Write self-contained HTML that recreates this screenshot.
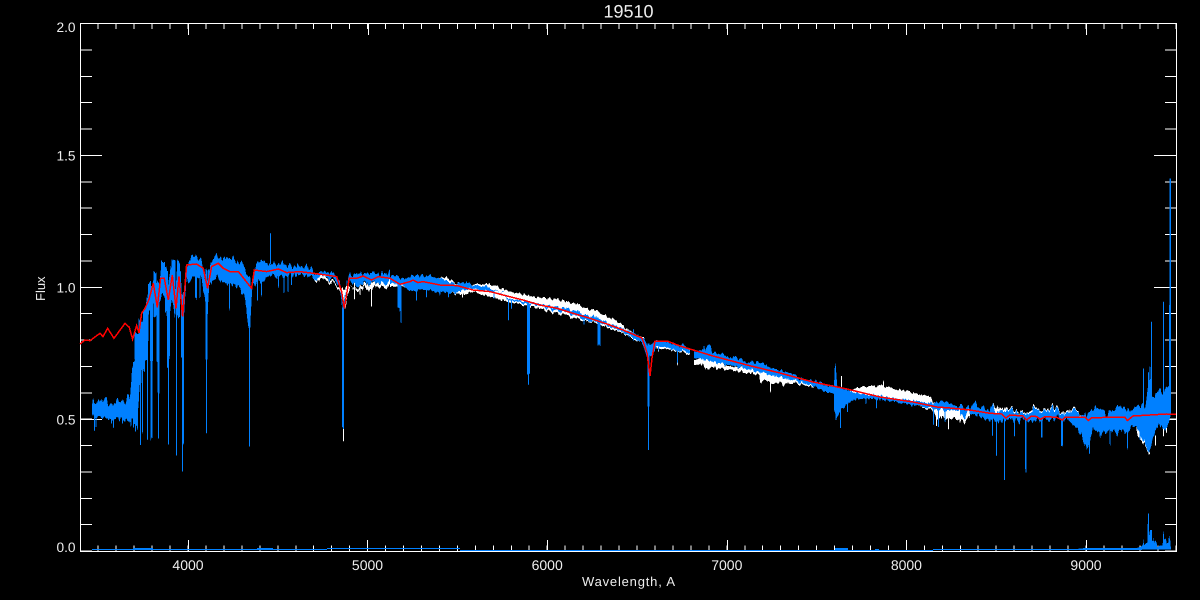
<!DOCTYPE html>
<html><head><meta charset="utf-8"><title>19510</title>
<style>
html,body{margin:0;padding:0;background:#000;width:1200px;height:600px;overflow:hidden}
svg{display:block}
text{font-family:"Liberation Sans",sans-serif;fill:#eee}
.b{fill:#0080ff}.w{fill:#fff}
.sb{stroke:#0080ff;stroke-width:3;fill:none}
.sw{stroke:#fff;stroke-width:3;fill:none}
</style></head><body>
<svg width="1200" height="600" viewBox="0 0 1200 600" xmlns="http://www.w3.org/2000/svg" shape-rendering="crispEdges">
<defs>
<filter id="nS" filterUnits="userSpaceOnUse" x="0" y="0" width="1200" height="600" color-interpolation-filters="sRGB">
<feTurbulence type="fractalNoise" baseFrequency="0.37 0.03" numOctaves="2" seed="4" result="t"/>
<feColorMatrix in="t" type="matrix" values="0 0 0 0 .5  0 1 0 0 0  0 0 0 0 .5  0 0 0 0 1" result="m"/>
<feDisplacementMap in="SourceGraphic" in2="m" scale="14" xChannelSelector="R" yChannelSelector="G"/>
</filter>
<filter id="nW" filterUnits="userSpaceOnUse" x="0" y="0" width="1200" height="600" color-interpolation-filters="sRGB">
<feTurbulence type="fractalNoise" baseFrequency="0.37 0.03" numOctaves="2" seed="9" result="t"/>
<feColorMatrix in="t" type="matrix" values="0 0 0 0 .5  0 1 0 0 0  0 0 0 0 .5  0 0 0 0 1" result="m"/>
<feDisplacementMap in="SourceGraphic" in2="m" scale="7" xChannelSelector="R" yChannelSelector="G"/>
</filter>
</defs>
<rect width="1200" height="600" fill="#000"/>

<!-- frame and ticks -->
<g fill="none" stroke="#fff" stroke-width="1">
<rect x="80.5" y="23.5" width="1096" height="528"/>
<line x1="97.7" y1="26" x2="1176" y2="26" stroke-width="6" stroke-dasharray="1 16.96"/>
<line x1="97.7" y1="548.5" x2="1176" y2="548.5" stroke-width="6" stroke-dasharray="1 16.96"/>
<line x1="86" y1="23" x2="86" y2="551" stroke-width="12" stroke-dasharray="1 25.38"/>
<line x1="1170.5" y1="23" x2="1170.5" y2="551" stroke-width="11" stroke-dasharray="1 25.38"/>
<path d="M188.5 23V35M368.5 23V35M547.5 23V35M727.5 23V35M906.5 23V35M1086.5 23V35M188.5 551V540M367.5 551V540M547.5 551V540M727.5 551V540M906.5 551V540M1086.5 551V540"/>
<path d="M80 155.5H102M80 287.5H102M80 419.5H102M1154 155.5H1176M1154 287.5H1176M1154 419.5H1176"/>
</g>

<!-- strong-noise part of the spectrum -->
<g filter="url(#nS)">
<g transform="translate(70 220) scale(.33333)">
<polygon class="w" points="720,160 790,183 812,215 835,200 960,185 960,202 920,200 900,208 860,205 840,200 826,265 815,225 790,190 740,180"/>
<path class="sw" d="M853 190V242M870 190V230M905 190V260"/>
</g>
<g transform="translate(950 170) scale(.33333)">
<polygon class="w" points="0,730 60,730 60,745 30,760 20,745 0,745"/>
<polygon class="w" points="130,705 155,712 172,716 200,718 225,732 235,720 250,710 270,722 290,711 315,710 330,726 345,720 380,718 395,732 380,740 130,745"/>
<polygon class="w" points="560,770 600,835 596,842 575,810 560,790"/>
<path class="sw" d="M650 720V790M640 760V800M616 800V832M585 780V810"/>
</g>
<g transform="translate(70 220) scale(.33333)">
<polygon class="b" points="66,555 70,545 85,548 105,532 115,550 130,552 145,542 165,545 180,528 186,450 195,420 205,345 215,325 225,275 237,190 245,205 255,165 262,240 275,130 285,130 290,230 303,135 315,250 322,120 332,155 338,290 345,185 350,145 360,118 378,105 395,125 410,200 422,128 440,112 470,112 495,120 520,135 535,178 545,210 552,140 570,122 590,132 640,132 680,140 712,140 740,157 790,157 810,190 818,260 835,170 860,158 880,160 920,160 960,156 960,186 900,190 860,190 830,186 822,270 818,280 810,205 790,176 740,172 712,168 680,162 640,170 600,166 570,180 548,186 541,320 535,320 525,235 510,208 495,192 470,190 430,172 418,195 412,290 405,235 395,180 378,172 350,182 345,240 341,300 335,250 325,205 315,290 305,230 295,330 285,235 275,225 262,260 255,235 237,280 225,400 212,470 200,610 185,604 160,595 120,598 100,590 66,590"/>
<path class="sb" style="stroke-width:14" d="M196 430V610M208 345V500M218 325V450"/>
<path class="sb" d="M73 590V635M78 590V620M125 590V610M130 590V625M157 590V612M183 590V615M190 590V625M197 590V630M203 450V628M211 400V677M218 430V640M232 240V650M265 250V656M295 320V668M320 250V705M338 290V750M380 170V240M390 170V235M409 280V645M478 190V262M528 210V260M538 300V673M562 180V248M574 170V220M626 165V205M642 165V210M654 165V225M665 165V200M601 35V130M820 270V620"/>
<path class="sb" style="stroke-width:6" d="M245 200V655M265 240V520M294 230V440M339 290V680M409 290V390M538 175V325M819 265V620M232 230V360"/>
<path class="sw" d="M820 620V667"/>
</g>
<!-- wide absorption columns between 3700 and 4100 A -->
<g transform="translate(125 250) scale(.33333)">
<path class="sb" style="stroke-width:12" d="M34 250V330M46 210V330M60 185V330M114 35V130M146 30V140"/>
<path class="sb" style="stroke-width:9" d="M73 95V160M79 160V330M90 68V200M99 100V330M124 60V180M131 125V330M160 30V190M173 130V330"/>
<path class="sb" style="stroke-width:6" d="M213 30V150M245 60V330M252 60V110"/>
</g>
<g transform="translate(950 170) scale(.33333)">
<polygon class="b" points="30,705 40,708 58,720 72,695 78,692 82,718 100,710 120,722 128,708 138,728 155,715 165,725 172,720 185,720 200,722 225,735 235,725 250,715 270,725 290,715 315,715 330,730 345,725 380,722 395,735 412,735 430,720 460,718 470,735 490,720 510,710 525,725 545,715 560,712 570,706 580,706 585,720 595,640 600,620 605,620 607,705 620,690 632,668 645,660 650,650 657,665 662,665 662,725 650,735 640,762 625,735 615,772 600,822 590,830 575,792 560,762 550,745 535,790 520,780 500,790 480,780 460,790 430,780 420,810 410,830 395,800 380,770 350,745 330,745 290,745 270,750 240,750 200,750 170,745 130,760 100,745 80,740 60,728 30,745"/>
<path class="sb" d="M640 402V700M604 456V700M580 588V720M596 612V720M600 595V720M139 740V864M163 740V930M127 740V805M193 740V795M405 790V828M532 770V838M480 770V822M450 770V802M418 780V848"/>
<path class="sb" style="stroke-width:5" d="M227 745V893M275 745V800M336 745V828"/>
</g>
<!-- noisy red end of the spectrum -->
<g transform="translate(1120 360) scale(.33333)">
<polygon class="b" points="0,140 30,150 55,140 70,130 75,165 90,160 95,120 105,105 120,90 135,100 152,60 152,175 145,190 135,215 125,195 110,200 100,235 85,268 70,240 55,210 35,195 20,205 0,180"/>
<path class="sb" d="M22 180V270M60 200V240"/>
</g>
</g>
<!-- undisturbed tall spikes -->
<g transform="translate(950 170) scale(.33333)">
<path class="sb" style="stroke-width:5" d="M661 25V730"/>
<path class="sb" style="stroke-width:5" d="M659 405V700"/>
<path class="sb" d="M228 893V908M163 900V930M640 402V660M604 456V660"/>
</g>

<!-- weak-noise part of the spectrum -->
<g filter="url(#nW)">
<g transform="translate(390 250) scale(.33333)">
<polygon class="w" points="0,95 140,85 170,78 200,100 240,105 280,100 350,120 365,125 420,138 500,148 560,162 620,185 680,213 710,235 740,255 760,262 770,280 740,270 700,250 600,215 500,190 400,165 350,155 250,125 220,135 140,120 0,108"/>
<polygon class="w" points="795,280 830,285 895,298 898,315 860,300 800,295"/>
<path class="sw" d="M218 120V146M862 300V346M805 290V305"/>
</g>
<g transform="translate(680 330) scale(.33333)">
<polygon class="w" points="0,50 30,60 30,75 0,65"/>
<polygon class="w" points="42,85 72,85 100,92 150,110 200,115 240,125 300,140 400,160 400,172 370,165 320,160 310,170 300,158 280,160 268,155 240,155 238,135 200,128 100,112 75,118 70,103 42,103"/>
<polygon class="w" points="505,185 530,172 570,165 610,170 680,183 750,200 760,215 840,240 840,272 825,265 805,268 790,262 770,262 760,240 700,225 600,205 520,190"/>
<path class="sw" d="M610 155V185M485 135V180M272 150V185M805 260V300M785 255V270M770 255V285"/>
</g>
<g transform="translate(390 250) scale(.33333)">
<polygon class="b" points="0,78 18,78 30,85 50,85 66,76 85,72 90,80 115,76 125,85 140,82 165,87 200,102 230,98 250,107 285,107 310,122 345,132 350,144 400,154 440,162 500,172 550,180 600,197 650,217 700,237 740,252 765,270 775,290 780,282 800,270 850,280 895,295 895,308 850,296 800,288 785,315 770,320 755,276 720,256 680,238 640,223 600,213 550,193 500,183 450,168 400,160 350,148 340,128 310,126 250,116 225,120 200,128 180,128 150,128 120,123 100,118 60,123 40,108 20,103 0,98"/>
<path class="sb" d="M33 100V220M80 110V150M110 110V143M150 120V135M175 120V140M312 125V145M355 145V210M364 150V175M415 160V407M582 200V222M717 240V262M730 240V268M805 290V302M862 295V340M30 100V185"/>
<path class="sb" style="stroke-width:9" d="M27 100V175M415 160V375M627 210V285"/>
</g>
<g transform="translate(680 330) scale(.33333)">
<polygon class="b" points="0,42 15,50 30,62 30,72 0,55"/>
<polygon class="b" points="42,60 70,60 72,40 76,60 84,42 92,45 96,65 115,72 150,82 170,82 200,97 240,96 270,112 300,122 330,130 360,147 390,152 420,157 445,168 462,165 465,100 468,115 472,170 500,177 520,187 560,192 620,202 700,212 750,220 790,213 840,232 840,240 800,243 750,233 700,226 620,211 560,205 520,210 500,223 480,243 470,263 462,240 462,190 430,183 400,168 360,158 300,143 240,128 200,116 100,96 42,80"/>
<path class="sb" d="M481 200V293M468 200V270M502 200V248M558 200V220M589 200V230M760 230V288M775 230V285M795 230V270"/>
</g>
</g>
<!-- H-alpha deep line -->
<g transform="translate(390 250) scale(.33333)">
<path class="sb" d="M776 280V600"/>
<path class="sb" style="stroke-width:6" d="M776 280V470"/>
</g>

<!-- data: near-zero error spectrum -->
<g fill="#0080ff" stroke="none">
<rect x="92" y="549" width="235" height="1"/>
<rect x="327" y="548" width="133" height="1"/>
<rect x="460" y="550" width="473" height="1"/>
<rect x="933" y="549" width="209" height="1"/>
<rect x="133" y="548" width="20" height="1"/>
<rect x="257" y="548" width="16" height="1"/>
<rect x="835" y="548" width="13" height="2"/>
<rect x="875" y="549" width="4" height="1"/>
<rect x="1083" y="548" width="9" height="1"/>
</g>
<g transform="translate(950 500) scale(.33333)">
<polygon class="b" points="385,146 425,144 440,144 500,144 560,144 572,140 578,136 580,117 582,136 587,130 592,128 594,40 597,40 597,110 600,90 606,90 607,130 610,112 612,130 615,120 620,128 622,142 630,136 638,136 640,90 643,120 648,115 650,130 655,128 657,105 661,123 663,148 385,148"/>
</g>

<!-- data: red model -->
<polyline fill="none" stroke="#ff0000" stroke-width="1.5" points="80,344 85,340 90,340.6 100,333.3 103,336.6 107.6,328.3 114,338.3 125,323.3 129.3,327.3 132.6,339.3 136.6,325.6 139,333 141.6,313.3 145,308.3 149,299.3 153.3,283.3 157.3,307.3 160.6,278.3 164.3,278.3 168.3,300 172.3,275 176,308.3 179,276.6 182.6,316.6 186.6,265 196.6,264 203.3,268.3 207.6,288.3 211.6,266.6 218.3,263.3 223.3,268.3 230,271.6 238.3,271.6 245,280 251.6,288.3 254.3,270 266.6,271.6 278.3,269 286.6,272.6 300,271.6 313.3,273.3 336.6,276.6 341.6,291.6 344.3,308.3 349.3,278.3 356.6,278.3 363.3,276 371.6,280 378.3,276.6 390,278.3 400,284.3 410,281.6 413,280 418,282.6 423,281.6 440,285 457,285.6 473,290 490,291.6 507,296 523,300 540,305 557,308.3 573,313.3 590,318.3 607,324 623,330 642,338 647,353 650,376 652,358 655,341 667,341 680,346 713,356 747,365 780,373 813,382 847,389 880,397 913,402 937,407 950,408 970,410 990,413.3 1001.6,414 1006,418 1010,415 1023,416 1026.6,420 1031.6,416 1036.6,416.6 1040.6,419.3 1045,416.6 1056.6,417.3 1062.3,420 1065,417.3 1085,417.3 1088.3,420.6 1091.6,417.6 1125,417.3 1127.3,420.6 1133,416 1150,415 1166.6,414 1176,414.3"/>

<!-- labels -->
<g shape-rendering="auto" text-rendering="geometricPrecision">
<text x="628.5" y="17.3" font-size="18" text-anchor="middle">19510</text>
<g font-size="13.7" text-anchor="end">
<text x="75.5" y="32">2.0</text>
<text x="75.5" y="160.5">1.5</text>
<text x="75.5" y="292.5">1.0</text>
<text x="75.5" y="424.5">0.5</text>
<text x="75.5" y="552">0.0</text>
</g>
<g font-size="14" text-anchor="middle">
<text x="188" y="570">4000</text>
<text x="367.5" y="570">5000</text>
<text x="547.2" y="570">6000</text>
<text x="726.8" y="570">7000</text>
<text x="906.4" y="570">8000</text>
<text x="1086" y="570">9000</text>
</g>
<text x="582" y="586" font-size="13" textLength="93" lengthAdjust="spacing">Wavelength, A</text>
<text transform="translate(45 301) rotate(-90)" font-size="13">Flux</text>
</g>
</svg>
</body></html>
